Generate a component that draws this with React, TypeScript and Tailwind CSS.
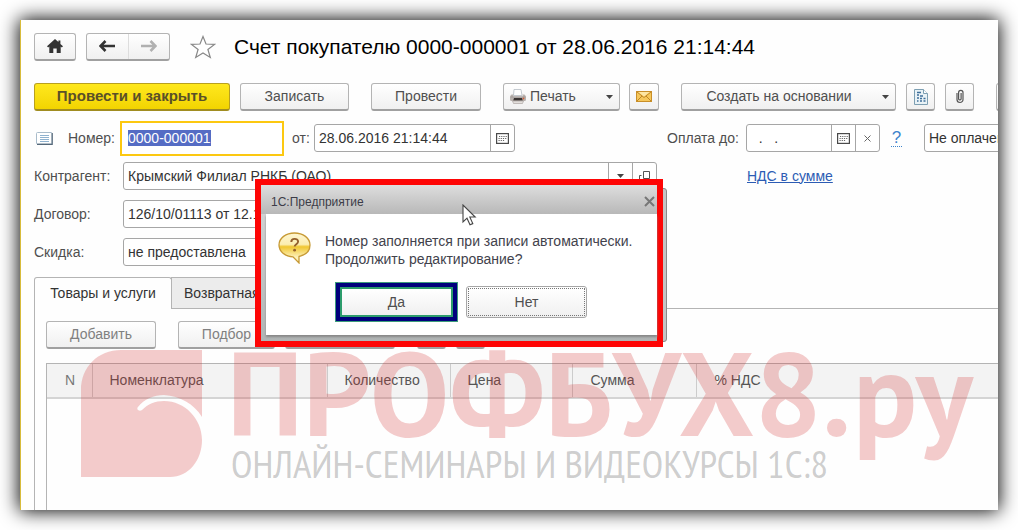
import { useEffect, useRef } from 'react';
import type { ReactNode } from 'react';

const btn =
  'flex h-7 shrink-0 items-center justify-center rounded-[3px] border border-[#b4b4b4] border-b-2 border-b-[#a0a0a0] bg-gradient-to-b from-white to-[#f0f0f0] text-[#4f4f4f]';
const field = 'flex h-7 shrink-0 items-stretch overflow-hidden rounded-[3px] border border-[#a6a6a6] bg-white';
const fieldInput = 'w-full min-w-0 flex-1 bg-transparent px-1 text-[#333] outline-none';
const addon = 'flex w-6 shrink-0 items-center justify-center border-l border-[#a6a6a6] text-[#444]';

function Caret() {
  return (
    <svg width="7" height="4" viewBox="0 0 7 4" aria-hidden="true">
      <path d="M0 0h7L3.5 4z" fill="#444" />
    </svg>
  );
}

function CalendarIcon() {
  return (
    <svg width="13" height="11" viewBox="0 0 13 11" aria-hidden="true">
      <rect x=".6" y=".6" width="11.8" height="9.8" fill="#fff" stroke="#4a4a4a" strokeWidth="1.2" />
      <path d="M3 3.5h8M2.5 5.5h8M2.5 7.5h6" stroke="#666" strokeWidth="1.1" strokeDasharray="1.2 1" />
    </svg>
  );
}

function HomeIcon() {
  return (
    <svg width="16" height="14" viewBox="0 0 16 14" aria-hidden="true">
      <path d="M8 0 0 7.3l1.2 1.1L2.3 7.5V14h4V9.5h3.4V14h4V7.5l1.1.9L16 7.3l-2.6-2.4V1.5h-2v1.6z" fill="#333" />
    </svg>
  );
}

function ArrowIcon({ color, flip }: { color: string; flip?: boolean }) {
  return (
    <svg width="16" height="12" viewBox="0 0 16 12" className={flip ? '-scale-x-100' : ''} aria-hidden="true">
      <path d="M6.5 1 1.5 6l5 5M2 6h14" fill="none" stroke={color} strokeWidth="2.6" />
    </svg>
  );
}

function PrinterIcon() {
  return (
    <svg width="16" height="15" viewBox="0 0 16 15" aria-hidden="true">
      <path d="M4 .5h7l1 6H3.5z" fill="#fff" stroke="#b5bcc4" strokeWidth=".8" />
      <path d="M1.5 5.5h2l-.3 2h9.600l-.4-2h2Q16 6.500 16 8v2.500q0 1.500-1.500 1.500h-13Q0 12 0 10.500V8q0-1.500 1.500-2.500z" fill="#b9b2ae" />
      <path d="M.5 8h15" stroke="#a09997" />
      <path d="M4 9h8l.8 2.600H3.200z" fill="#3a3432" />
      <path d="M2.500 12h11l-1 2.500h-9z" fill="#e3dfdc" stroke="#a29b98" strokeWidth=".6" />
      <circle cx="13.500" cy="9.500" r=".9" fill="#d2603c" />
    </svg>
  );
}

function MailIcon() {
  return (
    <svg width="16" height="11" viewBox="0 0 16 11" aria-hidden="true">
      <rect x=".5" y=".5" width="15" height="10" fill="#f6c75b" stroke="#c98f28" />
      <path d="M1 1l7 5.5L15 1M1 10l5-5M15 10l-5-5" fill="none" stroke="#b8801f" strokeWidth=".9" />
      <path d="M2.3 1h11.4L8 5.4z" fill="#fde6a4" />
    </svg>
  );
}

function ReportIcon() {
  return (
    <svg width="14" height="16" viewBox="0 0 14 16" aria-hidden="true">
      <path d="M.5.5h9l4 4v11H.5z" fill="#e9f2f6" stroke="#7d9fb2" />
      <path d="M9.5.5v4h4" fill="#fff" stroke="#7d9fb2" />
      <path d="M3 3.5h4M3 6h2M6 7h3M3 9h2M6 9.5h2M9.5 9.5h2M6 12h2M9.5 12h2M3 12h1.5" stroke="#3f6f9a" strokeWidth="1.3" />
    </svg>
  );
}

function ClipIcon() {
  return (
    <svg width="8" height="15" viewBox="0 0 8 15" aria-hidden="true">
      <path d="M1 4v6.5a3 3 0 0 0 6 0V3.5a2.2 2.2 0 0 0-4.4 0v6.5a1.3 1.3 0 0 0 2.5 0V4" fill="none" stroke="#555" strokeWidth="1.2" />
    </svg>
  );
}

function ListIcon() {
  return (
    <svg width="17" height="13" viewBox="0 0 17 13" aria-hidden="true">
      <rect x=".5" y=".5" width="15.5" height="11.5" rx="1" fill="#fff" stroke="#a9bccb" />
      <path d="M16.2 1v11.3H1" fill="none" stroke="#55687a" strokeWidth="1.2" />
      <path d="M4 3.5h9M4 5.5h9M4 7.5h9M4 9.5h9" stroke="#8fb2cf" />
    </svg>
  );
}

function OpenIcon() {
  return (
    <svg width="11" height="11" viewBox="0 0 11 11" aria-hidden="true">
      <path d="M4.5.5h6v7h-6zM2.5 4.5h-2v6h6v-1" fill="none" stroke="#555" />
    </svg>
  );
}

function QuestionBubble() {
  return (
    <svg width="33" height="32" viewBox="0 0 33 32" className="shrink-0" aria-hidden="true">
      <defs>
        <linearGradient id="bubble" x1="0" y1="0" x2="0" y2="1">
          <stop offset="0" stopColor="#fff6d0" />
          <stop offset=".38" stopColor="#fbedb0" />
          <stop offset=".46" stopColor="#f0c630" />
          <stop offset=".8" stopColor="#fdf0b8" />
        </linearGradient>
      </defs>
      <path d="M16.500 1C25 1 32 6 32 13c0 6-4.500 10-11 11.500V31l-6-6.200C7 24.500 1 19.500 1 13 1 6 8 1 16.500 1z" fill="url(#bubble)" stroke="#c79a35" strokeWidth="1.3" />
      <path d="M13.300 10c0-4.200 6.800-4 6.800-.4 0 2.600-3.400 2.600-3.400 5" fill="none" stroke="#94602c" strokeWidth="1.900" />
      <circle cx="16.600" cy="18.200" r="1.400" fill="#94602c" />
    </svg>
  );
}

function Row({ id, label, children }: { id: string; label: string; children: ReactNode }) {
  return (
    <div className="flex h-7 items-center">
      <label htmlFor={id} className="w-[89px] shrink-0 text-[#4f4f4f]">
        {label}
      </label>
      {children}
    </div>
  );
}

function Watermark() {
  return (
    <div className="pointer-events-none absolute left-[60px] top-[330px] flex gap-6 whitespace-nowrap">
      <svg width="122" height="128" viewBox="0 0 122 128" className="shrink-0" aria-hidden="true">
        <path
          fillRule="evenodd"
          fill="rgba(210,40,40,.24)"
          d="M0 127V40C0 17 17 0 40 0H121V90C121 110 108 127 89 127ZM57 57C63 49 73 45 83 45C99 46 113 54 121 67V90C121 69 104 51 83 51C74 51 67 54 61 60C58 62 55 59 57 57Z"
        />
      </svg>
      <div className="font-['PT_Sans','Roboto_Condensed',sans-serif]">
        <div className="-mt-1 h-24 text-[119px] font-bold leading-[92px] text-[rgba(210,40,40,.24)]">ПРОФБУХ8.ру</div>
        <div className="pl-1 font-['PT_Sans_Narrow','Roboto_Condensed',sans-serif] text-[39px] leading-[44px] text-[rgba(90,90,90,.3)]">
          ОНЛАЙН-СЕМИНАРЫ И ВИДЕОКУРСЫ 1С:8
        </div>
      </div>
    </div>
  );
}

function Dialog() {
  return (
    <>
      <div className="absolute left-[636px] top-[168px] h-[154px] w-[10px] rounded-[3px] border border-[#8a8a8a] bg-[#c4c4c4]" />
      <div
        role="dialog"
        aria-labelledby="dlg-title"
        className="absolute left-[234px] top-[159px] flex h-[168px] w-[408px] flex-col border-[6px] border-[#fe0505] bg-gradient-to-b from-[#d8d8d8] to-[#b0b4b4] pb-[6px] pl-[5px]"
      >
        <div className="-ml-[5px] flex h-[29px] shrink-0 items-center justify-between bg-gradient-to-b from-[#dedede] to-[#b8b8b8] pl-[10px] pr-[2px] pt-1">
          <h2 id="dlg-title" className="text-[12px] text-[#3c3c48]">
            1С:Предприятие
          </h2>
          <button type="button" aria-label="Закрыть" className="flex h-4 w-3 items-center justify-center">
            <svg width="11" height="11" viewBox="0 0 11 11" aria-hidden="true">
              <path d="M1 1l9 9M10 1l-9 9" stroke="#777" strokeWidth="2" />
            </svg>
          </button>
        </div>
        <div className="flex-1 bg-white shadow-[0_2px_2px_#888]">
          <div className="flex gap-[14px] pl-3 pt-[18px]">
            <QuestionBubble />
            <p className="whitespace-nowrap text-[14px] leading-[18px] text-[#42424c]">
              Номер заполняется при записи автоматически.
              <br />
              Продолжить редактирование?
            </p>
          </div>
          <div className="mt-[14px] flex items-center gap-2 pl-[69px]">
            <div className="border border-[#3c9c7c] bg-[#00007c] p-1">
              <button
                type="button"
                className="flex h-[30px] w-[113px] items-center justify-center border-2 border-[#2c9c6c] bg-gradient-to-b from-white to-[#f0f0f0] text-[14px] text-[#4f4f4f]"
              >
                Да
              </button>
            </div>
            <button
              type="button"
              className="flex h-8 w-[121px] items-center justify-center rounded-[3px] border border-[#a6a6a6] bg-gradient-to-b from-white to-[#f0f0f0] p-px text-[14px] text-[#4f4f4f]"
            >
              <span className="flex h-full w-full items-center justify-center border border-dotted border-[#777]">Нет</span>
            </button>
          </div>
        </div>
      </div>
      <svg width="15" height="22" viewBox="0 0 15 22" className="absolute left-[441px] top-[184px]" aria-hidden="true">
        <path d="M1 1v17l4-3.8 3 6.6 2.8-1.2-3-6.6h5.400z" fill="#fff" stroke="#444" strokeWidth="1.1" />
      </svg>
    </>
  );
}

export default function App() {
  const number = useRef<HTMLInputElement>(null);
  useEffect(() => {
    number.current?.focus();
    number.current?.select();
  }, []);

  return (
    <div className="flex min-h-screen flex-col overflow-hidden bg-white p-5 font-['Liberation_Sans',Arial,sans-serif] text-[14px]">
      <main className="relative flex flex-1 flex-col overflow-hidden border-l border-[#d8bc3c] bg-[#fefefe] pl-[13px] pt-3 shadow-[0_0_18px_1px_#000]">
        <header className="flex h-[29px] items-center">
          <button type="button" aria-label="Домой" className={`${btn} w-[42px]`}>
            <HomeIcon />
          </button>
          <div className={`${btn} ml-[10px] w-[84px]`}>
            <button type="button" aria-label="Назад" className="flex h-full flex-1 items-center justify-center border-r border-[#ddd]">
              <ArrowIcon color="#333" />
            </button>
            <button type="button" aria-label="Вперед" className="flex h-full flex-1 items-center justify-center">
              <ArrowIcon color="#b0b0b0" flip />
            </button>
          </div>
          <button type="button" aria-label="В избранное" className="ml-5">
            <svg width="26" height="24" viewBox="0 0 26 24" aria-hidden="true">
              <path d="M13 1.5l3 7.5 8.5.4-6.6 5 2.4 8.100L13 17.900l-7.300 4.600 2.400-8.100-6.600-5L10 9z" fill="#fff" stroke="#888" strokeWidth="1.2" />
            </svg>
          </button>
          <h1 className="ml-[18px] whitespace-nowrap text-[21px] text-black">Счет покупателю 0000-000001 от 28.06.2016 21:14:44</h1>
        </header>

        <div className="mt-[22px] flex">
          <button
            type="button"
            className="flex h-7 w-[196px] shrink-0 items-center justify-center rounded-[3px] border border-[#b8a020] border-b-2 border-b-[#a08c20] bg-gradient-to-b from-[#ffe81c] to-[#f2d400] text-[15px] font-bold text-[#5a5028]"
          >
            Провести и закрыть
          </button>
          <button type="button" className={`${btn} ml-[10px] w-[109px]`}>
            Записать
          </button>
          <button type="button" className={`${btn} ml-[22px] w-[110px]`}>
            Провести
          </button>
          <button type="button" className={`${btn} ml-[22px] w-[117px] gap-1 px-[6px]`}>
            <PrinterIcon />
            <span className="flex-1 text-left">Печать</span>
            <Caret />
          </button>
          <button type="button" aria-label="Письмо" className={`${btn} ml-[9px] w-[30px]`}>
            <MailIcon />
          </button>
          <button type="button" className={`${btn} ml-[22px] w-[215px] px-[6px]`}>
            <span className="flex-1 pr-3">Создать на основании</span>
            <Caret />
          </button>
          <button type="button" aria-label="Отчет" className={`${btn} ml-[10px] w-[29px]`}>
            <ReportIcon />
          </button>
          <button type="button" aria-label="Прикрепить" className={`${btn} ml-[10px] w-[29px]`}>
            <ClipIcon />
          </button>
          <button type="button" aria-label="Еще" className={`${btn} ml-[22px] w-[29px]`} />
        </div>

        <div className="mt-[9px] flex h-[36px] items-center text-[#4f4f4f]">
          <div className="ml-[2px] w-[32px] shrink-0">
            <ListIcon />
          </div>
          <label htmlFor="num" className="w-[52px] shrink-0">
            Номер:
          </label>
          <input
            id="num"
            ref={number}
            defaultValue="0000-000001"
            className="h-[35px] w-[164px] shrink-0 border-2 border-[#fcc810] bg-white px-[6px] text-[#333] outline-none selection:bg-[#556cc4] selection:text-white"
          />
          <label htmlFor="date" className="w-[30px] shrink-0 pl-2">
            от:
          </label>
          <div className={`${field} w-[201px]`}>
            <input id="date" defaultValue="28.06.2016 21:14:44" className={fieldInput} />
            <button type="button" aria-label="Календарь" className={addon}>
              <CalendarIcon />
            </button>
          </div>
          <label htmlFor="pay" className="ml-[152px] w-[79px] shrink-0 whitespace-nowrap">
            Оплата до:
          </label>
          <div className={`${field} w-[134px]`}>
            <input id="pay" defaultValue="  .   ." className={fieldInput} />
            <button type="button" aria-label="Календарь" className={addon}>
              <CalendarIcon />
            </button>
            <button type="button" aria-label="Очистить" className={addon}>
              <svg width="7" height="7" viewBox="0 0 7 7" aria-hidden="true">
                <path d="M.5.5l6 6M6.5.5l-6 6" stroke="#666" />
              </svg>
            </button>
          </div>
          <a href="#help" className="ml-[11px] w-[11px] shrink-0 border-b border-dotted border-[#3c84cc] text-center text-[17px] leading-[16px] text-[#3c84cc]">
            ?
          </a>
          <div className={`${field} ml-[22px] w-[130px]`}>
            <input aria-label="Состояние оплаты" defaultValue="Не оплачен" className={fieldInput} />
          </div>
        </div>

        <div className="mt-[6px] flex flex-col gap-[10px]">
          <Row id="agent" label="Контрагент:">
            <div className={`${field} w-[534px]`}>
              <input id="agent" defaultValue="Крымский Филиал РНКБ (ОАО)" className={fieldInput} />
              <button type="button" aria-label="Выбрать" className={addon}>
                <Caret />
              </button>
              <button type="button" aria-label="Открыть" className={addon}>
                <OpenIcon />
              </button>
            </div>
            <a href="#vat" className="ml-[90px] whitespace-nowrap text-[#2c5cb4] underline">
              НДС в сумме
            </a>
          </Row>
          <Row id="contract" label="Договор:">
            <div className={`${field} w-[534px]`}>
              <input id="contract" defaultValue="126/10/01113 от 12.10.2015" className={fieldInput} />
            </div>
          </Row>
          <Row id="discount" label="Скидка:">
            <div className={`${field} w-[200px]`}>
              <input id="discount" defaultValue="не предоставлена" className={fieldInput} />
            </div>
          </Row>
        </div>

        <div role="tablist" className="mt-[11px] flex h-8 items-stretch text-[#333]">
          <button type="button" role="tab" aria-selected="true" className="w-[138px] rounded-t-[3px] border border-b-0 border-[#b4b4b4] bg-[#fefefe]">
            Товары и услуги
          </button>
          <button type="button" role="tab" aria-selected="false" className="-ml-px w-[138px] whitespace-nowrap border border-[#b4b4b4] bg-[#ececec] px-3 text-left">
            Возвратная тара
          </button>
          <div className="flex-1 border-b border-[#b4b4b4]" />
        </div>

        <section className="flex flex-1 flex-col border-l border-[#b4b4b4] pl-[11px] pt-3">
          <div className="flex">
            <button type="button" className={`${btn} w-[110px] !text-[#808080]`}>
              Добавить
            </button>
            <button type="button" className={`${btn} ml-[22px] w-[97px] !text-[#808080]`}>
              Подбор
            </button>
            <button type="button" aria-label="Изменить" className={`${btn} ml-[10px] w-[110px]`} />
            <button type="button" aria-label="Вверх" className={`${btn} ml-[22px] w-[29px]`} />
            <button type="button" aria-label="Вниз" className={`${btn} ml-[10px] w-[29px]`} />
          </div>
          <div className="mt-[14px] min-h-[146px] flex-1 border-l border-t border-[#b4b4b4]">
            <table className="w-full table-fixed border-collapse text-left text-[#555]">
              <thead className="border-b-2 border-[#d4d4d4] bg-[#f3f3f3]">
                <tr className="h-[34px]">
                  <th scope="col" className="w-[45px] border-r border-[#ccc] pl-[18px] font-normal text-[#777]">N</th>
                  <th scope="col" className="w-[235px] border-r border-[#ccc] pl-[17px] font-normal">Номенклатура</th>
                  <th scope="col" className="w-[123px] border-r border-[#ccc] pl-[17px] font-normal">Количество</th>
                  <th scope="col" className="w-[122px] border-r border-[#ccc] pl-[17px] font-normal">Цена</th>
                  <th scope="col" className="w-[124px] border-r border-[#ccc] pl-[18px] font-normal">Сумма</th>
                  <th scope="col" className="pl-[18px] font-normal">% НДС</th>
                </tr>
              </thead>
              <tbody />
            </table>
          </div>
        </section>

        <Watermark />
        <Dialog />
      </main>
    </div>
  );
}
